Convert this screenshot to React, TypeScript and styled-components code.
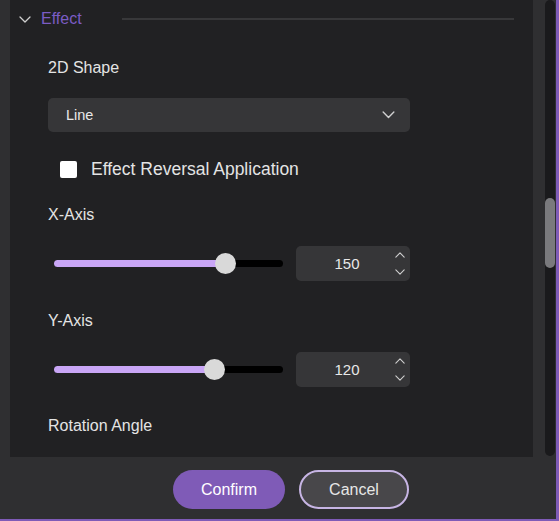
import styled, { createGlobalStyle } from "styled-components"

const Global = createGlobalStyle`
  html, body {
    margin: 0;
    padding: 0;
    background: #2f2f31;
  }
  * {
    box-sizing: border-box;
  }
`

const Frame = styled.div`
  width: 559px;
  height: 521px;
  display: flex;
  flex-direction: column;
  background: #2f2f31;
  border-right: 3px solid #7f5bb7;
  border-bottom: 2px solid #7f5bb7;
  font-family: "Liberation Sans", Arial, sans-serif;
  overflow: hidden;
`

const Body = styled.div`
  display: flex;
  height: 457px;
  flex-shrink: 0;
  padding-left: 10px;
`

const Panel = styled.div`
  width: 523px;
  height: 457px;
  background: #212123;
  overflow: hidden;
  padding: 9px 0 0 38px;
  display: flex;
  flex-direction: column;

  > * {
    flex-shrink: 0;
  }
`

const ScrollTrack = styled.div`
  position: relative;
  width: 10px;
  height: 456px;
  margin-left: 12px;
  background: #1a1a1c;
  border-radius: 5px;
`

const ScrollThumb = styled.div`
  position: absolute;
  left: 0;
  top: 198px;
  width: 10px;
  height: 70px;
  border-radius: 5px;
  background: #7a7a7d;
`

const SectionHeader = styled.div`
  display: flex;
  align-items: center;
  height: 20px;
  margin-left: -29px;
  margin-right: 19px;
  color: #7b5cc4;
  font-size: 16px;
  gap: 10px;
`

const HeaderRule = styled.div`
  flex: 1;
  height: 2px;
  background: #38383a;
  margin-left: 30px;
`

const Label = styled.div<{ $gap: number }>`
  color: #e4e4e4;
  font-size: 16px;
  line-height: 20px;
  margin-top: ${(p) => p.$gap}px;
`

const Select = styled.div`
  margin-top: 20px;
  width: 362px;
  height: 34px;
  background: #363638;
  border-radius: 5px;
  display: flex;
  align-items: center;
  justify-content: space-between;
  padding: 0 15px 0 18px;
  color: #e8e8e8;
  font-size: 14.5px;
`

const CheckRow = styled.label`
  display: flex;
  align-items: center;
  gap: 14px;
  margin-top: 25px;
  margin-left: 12px;
  height: 24px;
  color: #e4e4e4;
  font-size: 17.5px;
`

const Box = styled.span`
  width: 17px;
  height: 17px;
  background: #ffffff;
  border-radius: 2px;
`

const SliderRow = styled.div`
  display: flex;
  align-items: center;
  margin-top: 21px;
  height: 35px;
  gap: 7px;
`

const SliderBox = styled.div`
  position: relative;
  width: 241px;
  height: 35px;
  padding: 0 6px;
  display: flex;
  align-items: center;
`

const Track = styled.div`
  position: relative;
  width: 100%;
  height: 7px;
  border-radius: 4px;
  background: #000000;
`

const Fill = styled.div`
  position: absolute;
  left: 0;
  top: 0;
  bottom: 0;
  border-radius: 4px;
  background: #c9a6f6;
`

const Thumb = styled.div`
  position: absolute;
  top: 50%;
  width: 21px;
  height: 21px;
  margin-left: -10.5px;
  margin-top: -10.5px;
  border-radius: 50%;
  background: #d9d9d9;
`

const NumberBox = styled.div`
  position: relative;
  width: 114px;
  height: 35px;
  background: #363638;
  border-radius: 5px;
  display: flex;
  align-items: center;
  justify-content: center;
  color: #e8e8e8;
  font-size: 15px;
  padding-right: 12px;
`

const Spin = styled.div`
  position: absolute;
  right: 4px;
  top: 6px;
  bottom: 6px;
  width: 12px;
  display: flex;
  flex-direction: column;
  justify-content: space-between;
  align-items: center;
`

const Footer = styled.div`
  flex: 1;
  display: flex;
  align-items: flex-start;
  padding: 13px 0 0 173px;
  gap: 14px;
`

const Button = styled.button<{ $primary?: boolean }>`
  height: 39px;
  width: ${(p) => (p.$primary ? "112px" : "110px")};
  border-radius: 20px;
  font-family: inherit;
  font-size: 16px;
  color: ${(p) => (p.$primary ? "#ffffff" : "#e6e6e6")};
  background: ${(p) => (p.$primary ? "#7f5bb7" : "#48474a")};
  border: ${(p) => (p.$primary ? "none" : "2px solid #c7b5e4")};
`

const Chevron = ({ up, size = 12, color = "#d0d0d0" }: { up?: boolean; size?: number; color?: string }) => (
  <svg width={size} height={size / 2 + 1} viewBox="0 0 12 7" fill="none">
    <path
      d={up ? "M1 6 L6 1 L11 6" : "M1 1 L6 6 L11 1"}
      stroke={color}
      strokeWidth="1.3"
      strokeLinecap="round"
      strokeLinejoin="round"
    />
  </svg>
)

const Slider = ({ pct, value }: { pct: number; value: number }) => (
  <SliderRow>
    <SliderBox>
      <Track>
        <Fill style={{ width: `${pct * 100}%` }} />
        <Thumb style={{ left: `${pct * 100}%` }} />
      </Track>
    </SliderBox>
    <NumberBox>
      {value}
      <Spin>
        <Chevron up size={10} />
        <Chevron size={10} />
      </Spin>
    </NumberBox>
  </SliderRow>
)

export default function App() {
  return (
    <>
      <Global />
      <Frame>
        <Body>
          <Panel>
            <SectionHeader>
              <Chevron size={12} color="#cfcfcf" />
              Effect
              <HeaderRule />
            </SectionHeader>
            <Label $gap={29}>2D Shape</Label>
            <Select>
              Line
              <Chevron size={13} />
            </Select>
            <CheckRow>
              <Box />
              Effect Reversal Application
            </CheckRow>
            <Label $gap={24}>X-Axis</Label>
            <Slider pct={0.751} value={150} />
            <Label $gap={30}>Y-Axis</Label>
            <Slider pct={0.699} value={120} />
            <Label $gap={29}>Rotation Angle</Label>
            <SliderRow>
              <SliderBox />
              <NumberBox />
            </SliderRow>
          </Panel>
          <ScrollTrack>
            <ScrollThumb />
          </ScrollTrack>
        </Body>
        <Footer>
          <Button $primary>Confirm</Button>
          <Button>Cancel</Button>
        </Footer>
      </Frame>
    </>
  )
}
